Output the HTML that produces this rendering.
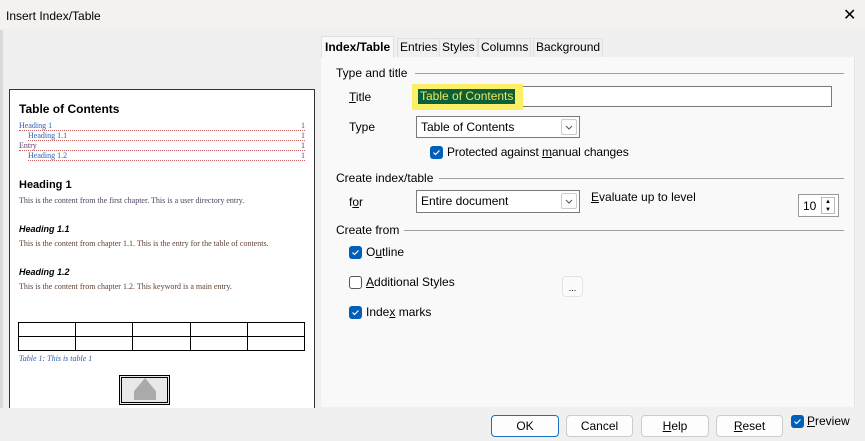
<!DOCTYPE html>
<html><head><meta charset="utf-8"><style>
*{margin:0;padding:0;box-sizing:border-box}
body{width:865px;height:441px;background:#f0f0f0;font-family:"Liberation Sans",sans-serif;font-size:12px;color:#000;position:relative;overflow:hidden}
.a{position:absolute;white-space:nowrap}
.u{text-decoration:underline}
.cb{position:absolute;width:13px;height:13px;border-radius:3px;background:#005fb8}
.cb svg{position:absolute;left:2px;top:2px}
.cbo{position:absolute;width:13px;height:13px;border-radius:3px;border:1px solid #555;background:#fff}
.dd{position:absolute;background:#fff;border:1px solid #7a7a7a;padding:3px 4px;font-size:12px}
.dd .ar{position:absolute;right:2px;top:2px;width:16px;height:16px;border:1px solid #ccc;border-radius:2px;background:#fff}
.btn{position:absolute;height:22px;border:1px solid #ccc;border-radius:4px;background:#fdfdfd;text-align:center;line-height:20px}
.sep{position:absolute;height:1px;background:#a0a0a0}
.tab{position:absolute;top:38px;height:19px;background:#f0f0f0;border:1px solid #e0e0e0;border-bottom:none;line-height:17px;padding:0 2px;font-size:12px}
.p{position:absolute;font-family:"Liberation Serif",serif;font-size:8px;white-space:nowrap}
.toc{position:absolute;font-family:"Liberation Serif",serif;font-size:8px;border-bottom:1px dotted #c06060;height:9px;line-height:8px}
</style></head><body>
<div class="a" style="left:0;top:0;width:865px;height:30px;background:#f3f2f0;border-bottom:1px solid #eee"></div>
<div class="a" style="left:6px;top:9px;font-size:12px">Insert Index/Table</div>
<div class="a" style="left:843px;top:5px;font-size:16px">✕</div>
<div class="a" style="left:0;top:30px;width:3px;height:411px;background:#d9d9d9"></div>

<div class="a" style="left:9px;top:89px;width:306px;height:330px;background:#fff;border:1px solid #333;border-bottom:none;overflow:hidden">
<div class="a" style="left:9px;top:12px;font-weight:bold;font-size:12px">Table of Contents</div>
<div class="toc" style="left:9px;top:32px;width:286px;color:#3060b0">Heading 1<span style="float:right">1</span></div>
<div class="toc" style="left:18px;top:42px;width:277px;color:#3060b0">Heading 1.1<span style="float:right">1</span></div>
<div class="toc" style="left:9px;top:52px;width:286px;color:#6a3a70">Entry<span style="float:right">1</span></div>
<div class="toc" style="left:18px;top:62px;width:277px;color:#3060b0">Heading 1.2<span style="float:right">1</span></div>
<div class="a" style="left:9px;top:89px;font-weight:bold;font-size:11px">Heading 1</div>
<div class="p" style="left:9px;top:106px;color:#504060">This is the content from the first chapter. This is a user directory entry.</div>
<div class="a" style="left:9px;top:134px;font-weight:bold;font-style:italic;font-size:9px">Heading 1.1</div>
<div class="p" style="left:9px;top:149px;color:#604030">This is the content from chapter 1.1. This is the entry for the table of contents.</div>
<div class="a" style="left:9px;top:177px;font-weight:bold;font-style:italic;font-size:9px">Heading 1.2</div>
<div class="p" style="left:9px;top:192px;color:#604030">This is the content from chapter 1.2. This keyword is a main entry.</div>
<table class="a" style="left:8px;top:232px;width:287px;height:29px;border-collapse:collapse"><tr><td style="border:1px solid #000"></td><td style="border:1px solid #000"></td><td style="border:1px solid #000"></td><td style="border:1px solid #000"></td><td style="border:1px solid #000"></td></tr><tr><td style="border:1px solid #000"></td><td style="border:1px solid #000"></td><td style="border:1px solid #000"></td><td style="border:1px solid #000"></td><td style="border:1px solid #000"></td></tr></table>
<div class="p" style="left:9px;top:264px;color:#3060b0;font-style:italic">Table 1: This is table 1</div>
<div class="a" style="left:109px;top:285px;width:51px;height:30px;border:3px double #000;background:#e8e8e8"></div>
<div class="a" style="left:124px;top:288px;width:22px;height:22px;background:#aaa;clip-path:polygon(50% 0,100% 60%,100% 100%,0 100%,0 60%)"></div>
</div>
<div class="a" style="left:0;top:408px;width:320px;height:33px;background:#f0f0f0"></div>

<div class="tab" style="left:397px">Entries</div>
<div class="tab" style="left:439px">Styles</div>
<div class="tab" style="left:478px">Columns</div>
<div class="tab" style="left:533px">Background</div>
<div class="a" style="left:321px;top:57px;width:534px;height:350px;background:#f9f9f9;border-right:1px solid #e6e6e6"></div>
<div class="tab" style="left:321px;top:36px;height:22px;background:#f9f9f9;font-weight:bold;padding:0 3px;line-height:20px">Index/Table</div>

<div class="a" style="left:336px;top:66px">Type and title</div>
<div class="sep" style="left:415px;top:73px;width:429px"></div>
<div class="a" style="left:349px;top:90px"><span class="u">T</span>itle</div>
<div class="dd" style="left:416px;top:86px;width:416px;height:21px"></div>
<div class="a" style="left:412px;top:84px;width:111px;height:26px;background:#fbf065"></div>
<div class="a" style="left:418px;top:89px;width:97px;height:15px;background:#0c6039;color:#f2e55a;line-height:15px;padding-left:2px">Table of Contents</div>
<div class="a" style="left:349px;top:120px">Type</div>
<div class="dd" style="left:416px;top:116px;width:164px;height:22px">Table of Contents<div class="ar"><svg width="14" height="14"><path d="M4 6l3 3 3-3" stroke="#555" fill="none"/></svg></div></div>
<div class="cb" style="left:430px;top:146px"><svg width="9" height="9"><path d="M1.5 4.5l2 2 4-4" stroke="#fff" fill="none" stroke-width="1.2"/></svg></div>
<div class="a" style="left:447px;top:145px;letter-spacing:-0.1px">Protected against <span class="u">m</span>anual changes</div>

<div class="a" style="left:336px;top:171px">Create index/table</div>
<div class="sep" style="left:439px;top:178px;width:405px"></div>
<div class="a" style="left:349px;top:195px">f<span class="u">o</span>r</div>
<div class="dd" style="left:416px;top:190px;width:164px;height:23px">Entire document<div class="ar"><svg width="14" height="14"><path d="M4 6l3 3 3-3" stroke="#555" fill="none"/></svg></div></div>
<div class="a" style="left:591px;top:190px"><span class="u">E</span>valuate up to level</div>
<div class="a" style="left:798px;top:194px;width:41px;height:23px;border:1px solid #999;background:#fff;padding:4px 0 0 4px">10</div>
<div class="a" style="left:821px;top:197px;width:14px;height:17px;border:1px solid #bbb;font-size:6px;line-height:8px;text-align:center;background:#fff">▲<br>▼</div>
<div class="a" style="left:336px;top:223px">Create from</div>
<div class="sep" style="left:404px;top:230px;width:440px"></div>
<div class="cb" style="left:349px;top:246px"><svg width="9" height="9"><path d="M1.5 4.5l2 2 4-4" stroke="#fff" fill="none" stroke-width="1.2"/></svg></div>
<div class="a" style="left:366px;top:245px">O<span class="u">u</span>tline</div>
<div class="cbo" style="left:349px;top:276px"></div>
<div class="a" style="left:366px;top:275px"><span class="u">A</span>dditional Styles</div>
<div class="btn" style="left:562px;top:276px;width:21px;height:21px;background:#fbfbfb;border-color:#e3e3e3;font-size:9px;line-height:22px">...</div>
<div class="cb" style="left:349px;top:306px"><svg width="9" height="9"><path d="M1.5 4.5l2 2 4-4" stroke="#fff" fill="none" stroke-width="1.2"/></svg></div>
<div class="a" style="left:366px;top:305px">Inde<span class="u">x</span> marks</div>

<div class="btn" style="left:491px;top:415px;width:68px;border-color:#1c6fc0">OK</div>
<div class="btn" style="left:566px;top:415px;width:67px">Cancel</div>
<div class="btn" style="left:641px;top:415px;width:68px"><span class="u">H</span>elp</div>
<div class="btn" style="left:716px;top:415px;width:67px"><span class="u">R</span>eset</div>
<div class="cb" style="left:791px;top:415px"><svg width="9" height="9"><path d="M1.5 4.5l2 2 4-4" stroke="#fff" fill="none" stroke-width="1.2"/></svg></div>
<div class="a" style="left:807px;top:414px"><span class="u">P</span>review</div>
</body></html>
